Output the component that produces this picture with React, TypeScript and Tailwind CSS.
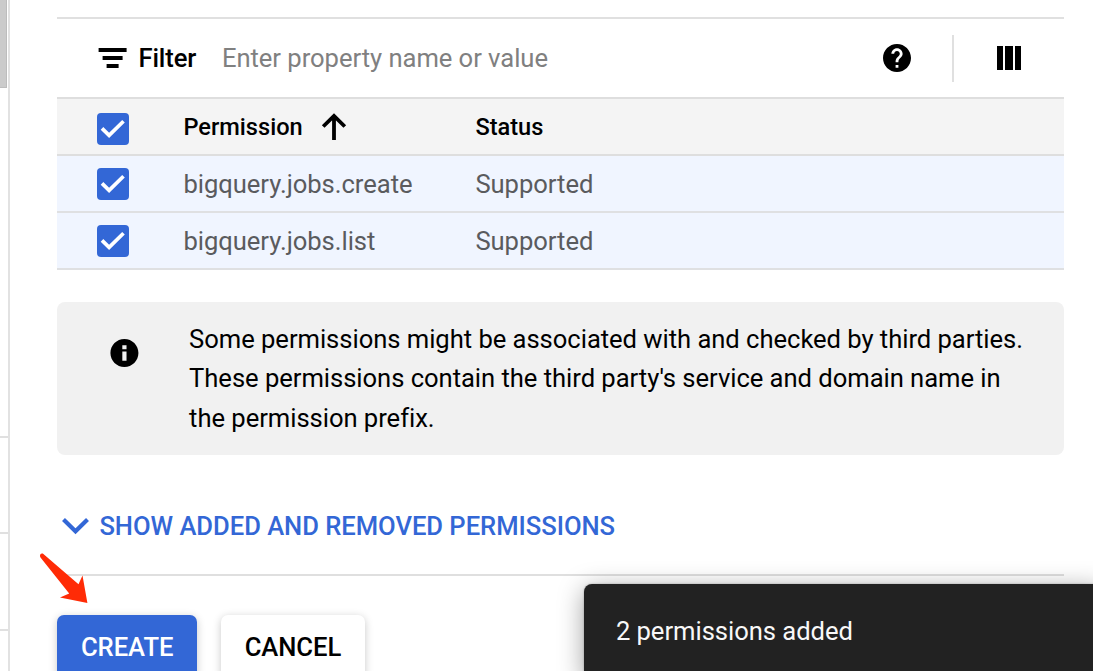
import type { ReactNode } from "react";

function Checkbox({ className = "" }: { className?: string }) {
  return (
    <span
      role="checkbox"
      aria-checked="true"
      className={`flex h-8 w-8 shrink-0 items-center justify-center rounded-[4px] bg-[#3367d6] ${className}`}
    >
      <svg viewBox="0 0 32 32" className="h-8 w-8" fill="none" stroke="#fff" strokeWidth="3.7">
        <path d="M5 15.4 L12.1 22.4 L26.5 8.3" />
      </svg>
    </span>
  );
}

function PermissionRow({ name, status }: { name: string; status: string }) {
  return (
    <div className="flex h-[57px] shrink-0 items-center border-b-2 border-[#dfe0e2] bg-[#f0f5ff] pl-[39.5px] text-[25.6px] tracking-[-0.04px] text-[#5a5b5e]">
      <Checkbox />
      <span className="mt-[2px] ml-[54.5px] w-[292px]">{name}</span>
      <span className="mt-[2px]">{status}</span>
    </div>
  );
}

function Button({ className, children }: { className: string; children: ReactNode }) {
  return (
    <button
      className={`h-[64px] rounded-[7px] text-[25.6px] font-medium tracking-[-0.05px] shadow-[0_2px_8px_rgba(0,0,0,0.22)] ${className}`}
    >
      {children}
    </button>
  );
}

export default function App() {
  return (
    <div className="relative flex h-[671px] w-[1093px] overflow-hidden bg-white font-['Roboto',sans-serif] text-black">
      <aside className="flex h-full w-[10px] shrink-0 flex-col border-r-2 border-[#e2e2e2]">
        <div className="h-[88px] w-[7px] shrink-0 border-r border-b border-[#bdbdbd] bg-[#cbcbcb]" />
        <div className="h-[350px] shrink-0 border-b-2 border-[#e0e0e0]" />
        <div className="h-[96px] shrink-0 border-b-2 border-[#e0e0e0]" />
        <div className="h-[97px] shrink-0 border-b-2 border-[#e0e0e0]" />
      </aside>

      <main className="ml-[47.4px] flex w-[1006.5px] shrink-0 flex-col pt-[17px]">
        <div className="flex h-[80px] shrink-0 items-center border-t-2 border-[#e0e0e0] pl-[41px]">
          <svg viewBox="-0.6 0 28 20" className="h-5 w-7 shrink-0 overflow-visible">
            <path d="M0 0h28v4H0zM4 8h20v4H4zM8 16h12v4H8z" />
          </svg>
          <span className="ml-3 w-[83.5px] text-[25.6px] font-medium tracking-[-0.1px]">Filter</span>
          <span className="grow text-[25.6px] tracking-[-0.04px] text-[#808080]">Enter property name or value</span>
          <svg viewBox="2 2 20 20" className="h-7 w-7 shrink-0">
            <path d="M12 2C6.48 2 2 6.48 2 12s4.48 10 10 10 10-4.48 10-10S17.52 2 12 2zm1 17h-2v-2h2v2zm2.07-7.75l-.9.92C13.45 12.9 13 13.5 13 15h-2v-.5c0-1.1.45-2.1 1.17-2.83l1.24-1.26c.37-.36.59-.86.59-1.41 0-1.1-.9-2-2-2s-2 .9-2 2H8c0-2.21 1.79-4 4-4s4 1.79 4 4c0 .88-.36 1.68-.93 2.25z" />
          </svg>
          <div className="ml-[41px] h-[47px] w-[2px] bg-[#e0e0e0]" />
          <svg viewBox="0 0 24 24" className="mr-[43px] ml-[43px] h-6 w-6 shrink-0">
            <path d="M0 0h6v24H0zM8 0h8v24H8zM18 0h6v24h-6z" />
          </svg>
        </div>

        <div className="flex h-[59px] shrink-0 items-center border-y-2 border-[#dedede] bg-[#f4f4f4] pl-[39.5px] text-[23.6px] font-medium">
          <Checkbox className="mt-[4px]" />
          <div className="mt-[2px] ml-[54.5px] flex w-[292px] items-center">
            <span className="w-[137.5px]">Permission</span>
            <svg viewBox="0 0 26 28" className="h-7 w-[26px]" fill="none" stroke="#000" strokeWidth="3.8">
              <path d="M13 27V3M2.2 13.5L13 2.8L23.8 13.5" />
            </svg>
          </div>
          <span className="mt-[2px]">Status</span>
        </div>
        <PermissionRow name="bigquery.jobs.create" status="Supported" />
        <PermissionRow name="bigquery.jobs.list" status="Supported" />

        <section className="mt-8 flex h-[153px] shrink-0 rounded-[8px] bg-[#f1f1f1] pl-[53px]">
          <svg viewBox="1.7 2 20 20" className="mt-[37px] h-7 w-7 shrink-0 overflow-visible">
            <path d="M12 2C6.48 2 2 6.48 2 12s4.48 10 10 10 10-4.48 10-10S17.52 2 12 2zm1.5 15.5h-3V11h3v6.5zm0-8.2h-3V6.5h3v2.8z" />
          </svg>
          <p className="mt-[18px] ml-[50.7px] text-[25.6px] leading-[39.4px] tracking-[-0.04px] whitespace-nowrap">
            Some permissions might be associated with and checked by third parties.
            <br />
            These permissions contain the third party's service and domain name in
            <br />
            the permission prefix.
          </p>
        </section>

        <div className="mt-[40px] flex h-[62px] shrink-0 items-center pl-[4px] text-[#3367d6]">
          <svg viewBox="-0.5 0 28 18" className="h-[18px] w-7 shrink-0 overflow-visible" fill="none" stroke="currentColor" strokeWidth="4.2">
            <path d="M2 2.5L14 14.2L26 2.5" />
          </svg>
          <span className="ml-[10px] text-[25.6px] font-medium tracking-[-0.03px] whitespace-nowrap">SHOW ADDED AND REMOVED PERMISSIONS</span>
        </div>

        <div className="mt-[17px] flex shrink-0 gap-6 border-t-2 border-[#dfdfdf] pt-[39px]">
          <Button className="w-[139.5px] bg-[#3367d6] text-white">CREATE</Button>
          <Button className="w-[144px] bg-white text-black">CANCEL</Button>
        </div>
      </main>

      <svg viewBox="0 0 52 54" className="absolute top-[551px] left-[38px] h-[54px] w-[52px]">
        <path d="M2 4.5Q2.2 2 4.8 2.6L40.5 33.2L44.5 24.5L49.4 52L22 46.6L31.2 42.5L2.5 6.5Q1.9 5.5 2 4.5Z" fill="#ff2b06" />
      </svg>

      <div
        role="status"
        className="absolute top-[584px] left-[584.4px] flex h-[95px] w-[520px] items-center rounded-[8px] bg-[#222222] pl-[31.5px] text-[25.6px] tracking-[-0.04px] text-[#f8f8f8] shadow-[0_5px_26px_rgba(0,0,0,0.38),0_0_2px_rgba(0,0,0,0.3)]"
      >
        2 permissions added
      </div>
    </div>
  );
}
